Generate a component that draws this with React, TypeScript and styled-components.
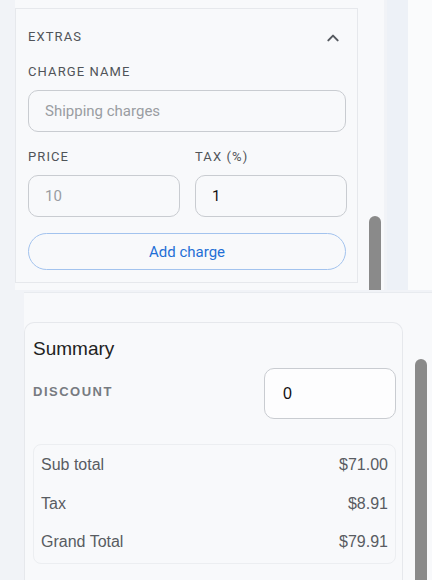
import React from 'react';
import styled, { createGlobalStyle } from 'styled-components';

const GlobalStyle = createGlobalStyle`
  body {
    margin: 0;
    background: #f1f3f7;
    font-family: Roboto, "Liberation Sans", Arial, sans-serif;
  }
`;

const Page = styled.div`
  width: 432px;
  height: 580px;
  overflow: hidden;
  display: flex;
  flex-direction: column;
`;

const TopSection = styled.div`
  display: flex;
  height: 290px;
  flex-shrink: 0;
`;

const TopPane = styled.div`
  display: flex;
  width: 369px;
  margin-left: 15px;
  background: #f8f9fb;
`;

const SideStrip = styled.div`
  width: 21px;
  margin-left: 3px;
  background: #edf1f7;
`;

const Filler = styled.div`
  flex: 1;
  background: #fafbfc;
`;

const Track = styled.div<{ $offset: number }>`
  width: 12px;
  flex-shrink: 0;
  display: flex;
  flex-direction: column;
  padding-top: ${(p) => p.$offset}px;
`;

const Thumb = styled.div`
  flex: 1;
  background: #8a8a8a;
  border-radius: 6px 6px 0 0;
`;

const ExtrasCard = styled.div`
  width: 343px;
  height: 275px;
  box-sizing: border-box;
  margin-top: 8px;
  margin-right: 11px;
  border: 1px solid #e6e8ec;
  background: #f8f9fb;
  padding: 13px 11px 11px 12px;
  display: flex;
  flex-direction: column;
`;

const Header = styled.div`
  display: flex;
  align-items: center;
  justify-content: space-between;
  height: 30px;
`;

const Label = styled.div<{ $top?: number }>`
  font-size: 13px;
  font-weight: 400;
  letter-spacing: 1.1px;
  line-height: 16px;
  color: #505459;
  margin-top: ${(p) => p.$top ?? 0}px;
`;

const IconButton = styled.div`
  width: 26px;
  height: 24px;
  display: flex;
  align-items: center;
  justify-content: center;
  padding-top: 2px;
`;

const Input = styled.input<{ $h?: number }>`
  box-sizing: border-box;
  width: 100%;
  height: ${(p) => p.$h ?? 42}px;
  border: 1px solid #c9ccd1;
  border-radius: 10px;
  background: transparent;
  padding: 0 16px;
  font-family: Roboto, "Liberation Sans", Arial, sans-serif;
  font-size: 15px;
  color: #111;
  outline: none;

  &::placeholder {
    color: #9a9da2;
  }
`;

const FieldBlock = styled.div<{ $top: number }>`
  margin-top: ${(p) => p.$top}px;
`;

const Grid = styled.div`
  display: grid;
  grid-template-columns: 152px 152px;
  column-gap: 15px;
  margin-top: 17px;
`;

const AddButton = styled.button`
  margin-top: 16px;
  height: 37px;
  width: 100%;
  border-radius: 19px;
  border: 1px solid #a3c3ee;
  background: transparent;
  color: #1f6fd6;
  font-family: Roboto, "Liberation Sans", Arial, sans-serif;
  font-size: 15px;
`;

const BottomSection = styled.div`
  display: flex;
  flex: 1;
  margin-left: 24px;
  background: #f8f9fb;
  border-top: 1px solid #e8ebef;
  margin-top: 2px;
`;

const SummaryCard = styled.div`
  width: 379px;
  box-sizing: border-box;
  margin-top: 29px;
  margin-right: 12px;
  border: 1px solid #e6e8ec;
  border-bottom: none;
  border-radius: 10px 10px 0 0;
  padding: 14px 6px 0 8px;
  font-family: "Liberation Sans", Arial, sans-serif;
`;

const Title = styled.h2`
  margin: 0;
  font-size: 19px;
  font-weight: 400;
  line-height: 24px;
  color: #222;
`;

const DiscountRow = styled.div`
  display: flex;
  align-items: center;
  justify-content: space-between;
  margin-top: 7px;
`;

const DiscountLabel = styled(Label)`
  font-family: "Liberation Sans", Arial, sans-serif;
  font-weight: 700;
  font-size: 13px;
  letter-spacing: 1.5px;
  color: #777b81;
  margin-top: -4px;
`;

const DiscountInput = styled(Input)`
  width: 132px;
  height: 51px;
  padding: 0 18px;
  background: #fdfdfe;
  font-family: "Liberation Sans", Arial, sans-serif;
  font-size: 16px;
`;

const Totals = styled.div`
  margin-top: 25px;
  border: 1px solid #eceef1;
  border-radius: 8px;
  padding: 1px 7px 1px 7px;
`;

const Row = styled.div`
  display: flex;
  justify-content: space-between;
  align-items: center;
  height: 38.5px;
  font-size: 16px;
  color: #585c62;
`;

const Chevron = () => (
  <svg width="16" height="16" viewBox="0 0 24 24" fill="none" stroke="#55595f" strokeWidth="3" strokeLinecap="round" strokeLinejoin="round">
    <path d="M5 15.5l7-7 7 7" />
  </svg>
);

const rows = [
  { name: 'Sub total', value: '$71.00' },
  { name: 'Tax', value: '$8.91' },
  { name: 'Grand Total', value: '$79.91' },
];

export default function App() {
  return (
    <>
      <GlobalStyle />
      <Page>
        <TopSection>
          <TopPane>
            <ExtrasCard>
              <Header>
                <Label>EXTRAS</Label>
                <IconButton>
                  <Chevron />
                </IconButton>
              </Header>
              <Label $top={12}>CHARGE NAME</Label>
              <FieldBlock $top={10}>
                <Input placeholder="Shipping charges" />
              </FieldBlock>
              <Grid>
                <div>
                  <Label>PRICE</Label>
                  <FieldBlock $top={10}>
                    <Input placeholder="10" />
                  </FieldBlock>
                </div>
                <div>
                  <Label>TAX (%)</Label>
                  <FieldBlock $top={10}>
                    <Input defaultValue="1" />
                  </FieldBlock>
                </div>
              </Grid>
              <AddButton>Add charge</AddButton>
            </ExtrasCard>
            <Track $offset={216}>
              <Thumb />
            </Track>
          </TopPane>
          <SideStrip />
          <Filler />
        </TopSection>
        <BottomSection>
          <SummaryCard>
            <Title>Summary</Title>
            <DiscountRow>
              <DiscountLabel>DISCOUNT</DiscountLabel>
              <DiscountInput defaultValue="0" />
            </DiscountRow>
            <Totals>
              {rows.map((r) => (
                <Row key={r.name}>
                  <span>{r.name}</span>
                  <span>{r.value}</span>
                </Row>
              ))}
            </Totals>
          </SummaryCard>
          <Track $offset={66}>
            <Thumb />
          </Track>
        </BottomSection>
      </Page>
    </>
  );
}
